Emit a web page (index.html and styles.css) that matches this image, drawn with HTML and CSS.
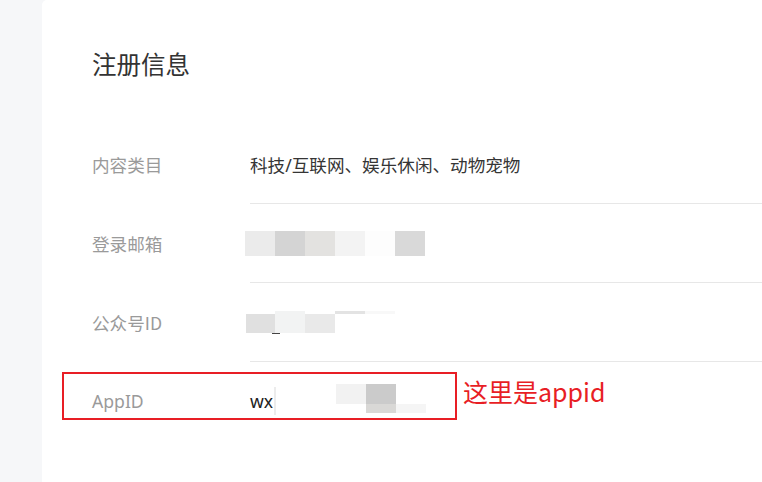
FILE: index.html
```html
<!DOCTYPE html>
<html lang="zh-CN">
<head>
<meta charset="utf-8">
<title>注册信息</title>
<link rel="stylesheet" href="styles.css">
</head>
<body>
<div class="page">
  <aside class="side"></aside>
  <main class="card">
    <h1 class="title">注册信息</h1>
    <div class="rows">
      <div class="row">
        <div class="label">内容类目</div>
        <div class="value">科技/互联网、娱乐休闲、动物宠物</div>
      </div>
      <div class="row">
        <div class="label">登录邮箱</div>
        <div class="value">
          <div class="mosaic m-mail">
            <i class="c1"></i><i class="c2"></i><i class="c3"></i><i class="c4"></i><i class="c5"></i><i class="c6"></i>
          </div>
        </div>
      </div>
      <div class="row">
        <div class="label">公众号ID</div>
        <div class="value">
          <div class="mosaic m-id">
            <i></i><i class="a2"></i><i></i><i class="a4"></i><i class="a5"></i>
            <i class="b1"></i><i class="b2"></i><i class="b3"></i><i></i><i></i>
            <span class="underscore"></span>
          </div>
        </div>
      </div>
      <div class="row last">
        <div class="label latin">AppID</div>
        <div class="value">
          <span class="wx">wx</span><span class="caret"></span>
          <div class="mosaic m-app">
            <i class="d1"></i><i class="d2"></i><i></i>
            <i></i><i class="e2"></i><i class="e3"></i>
          </div>
        </div>
      </div>
    </div>
    <div class="annotation">
      <div class="mark"></div>
      <span class="note">这里是appid</span>
    </div>
  </main>
</div>
</body>
</html>
```
FILE: styles.css
```css
html, body {
  margin: 0;
  padding: 0;
  background: #f6f7f9;
}
body {
  font-family: "Noto Sans", "Noto Sans CJK SC", sans-serif;
  color: #353535;
}
.page {
  display: flex;
  width: 762px;
  height: 482px;
  overflow: hidden;
}
.side {
  width: 42px;
  flex: none;
  background: #f6f7f9;
}
.card {
  position: relative;
  flex: 1;
  background: #fff;
  border-top-left-radius: 5px;
  padding: 44px 0 0 50px;
}
.title {
  margin: 0;
  font-weight: normal;
  font-size: 24.5px;
  line-height: 40px;
  height: 40px;
  color: #333;
  font-family: "Noto Sans CJK SC", sans-serif;
}
.rows {
  margin-top: 41px;
}
.row {
  display: flex;
  height: 79px;
}
.label {
  width: 158px;
  flex: none;
  display: flex;
  align-items: center;
  font-size: 17.6px;
  color: #9a9a9a;
  padding-bottom: 1px;
  font-family: "Noto Sans CJK SC", sans-serif;
}
.label.latin {
  font-family: "Noto Sans", sans-serif;
  font-size: 17.6px;
}
.value {
  flex: 1;
  display: flex;
  align-items: center;
  border-bottom: 1px solid #e7e7e7;
  font-size: 17.6px;
  color: #353535;
  font-family: "Noto Sans", "Noto Sans CJK SC", sans-serif;
}
.row.last .value {
  border-bottom-color: transparent;
}
.mosaic {
  display: grid;
  grid-template-columns: repeat(6, 30px);
  margin-left: -5px;
}
.mosaic i {
  display: block;
}
.m-mail {
  grid-template-rows: 25px;
}
.m-mail .c1 { background: #ebebeb; }
.m-mail .c2 { background: #d4d4d4; }
.m-mail .c3 { background: #e3e2e0; }
.m-mail .c4 { background: #f3f3f3; }
.m-mail .c5 { background: #fdfdfd; }
.m-mail .c6 { background: #d9d9d9; }

.m-id {
  position: relative;
  grid-template-columns: repeat(5, 30px);
  grid-template-rows: 3px 19px;
  margin-bottom: 1px;
}
.m-id .a2 { background: #f2f3f3; }
.m-id .a4 { background: #e3e3e3; }
.m-id .a5 { background: #f8f8f8; }
.m-id .b1 { background: #e0e0e0; margin-left: 1px; }
.m-id .b2 { background: #f2f3f3; }
.m-id .b3 { background: #e9e9e9; }
.underscore {
  position: absolute;
  left: 27px;
  top: 22px;
  width: 8px;
  height: 1.5px;
  background: #444;
}
.wx {
  font-size: 17.6px;
  color: #222;
  line-height: 20px;
}
.caret {
  width: 2px;
  height: 28px;
  background: #ececec;
  margin-left: 1px;
}
.m-app {
  grid-template-columns: repeat(3, 30px);
  grid-template-rows: 20px 9px;
  margin-left: 60px;
  margin-bottom: 5px;
}
.m-app .d1 { background: #f2f2f2; }
.m-app .d2 { background: #cbcbcb; }
.m-app .e2 { background: #d9d8d6; }
.m-app .e3 { background: #f5f5f5; }

.annotation {
  position: absolute;
  left: 20px;
  top: 372px;
  display: flex;
  align-items: flex-start;
}
.mark {
  width: 395px;
  height: 48px;
  box-sizing: border-box;
  border: 2px solid #e81e25;
}
.note {
  margin-left: 6px;
  margin-top: 4px;
  font-size: 25px;
  line-height: 30px;
  color: #e81e25;
  font-family: "Noto Sans CJK SC", sans-serif;
  white-space: nowrap;
}
```
